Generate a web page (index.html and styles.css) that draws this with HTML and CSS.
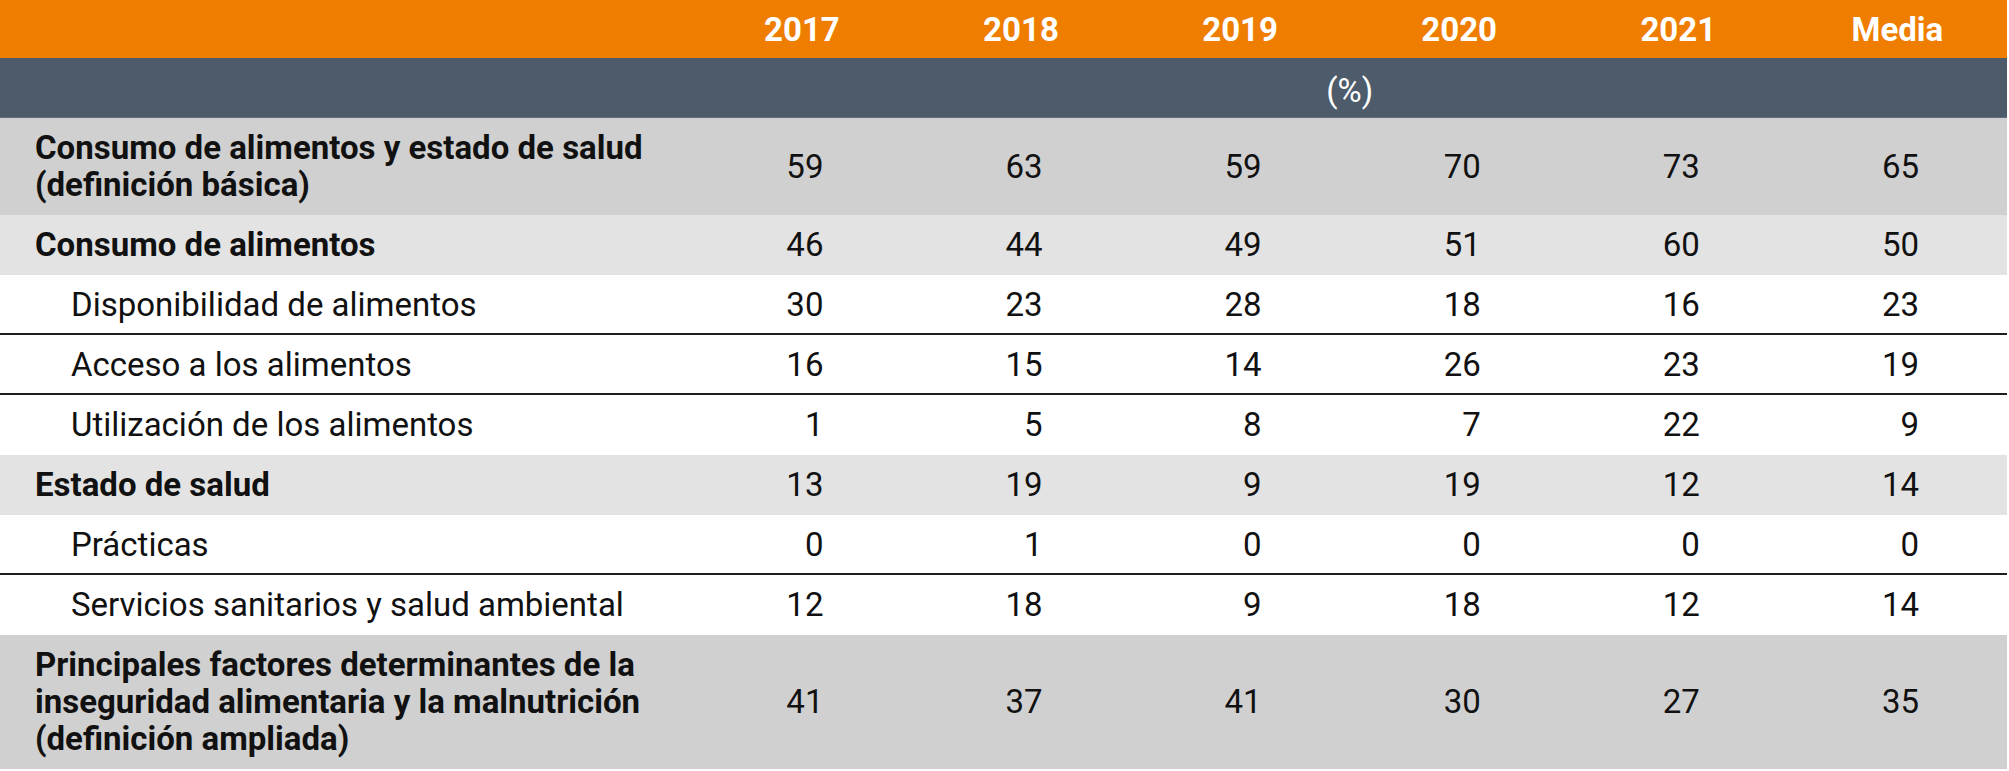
FILE: index.html
```html
<!DOCTYPE html>
<html lang="es">
<head>
<meta charset="utf-8">
<title>Tabla</title>
<link rel="stylesheet" href="styles.css">
</head>
<body>
<table class="data">
  <colgroup>
    <col class="col-label">
    <col class="col-num"><col class="col-num"><col class="col-num">
    <col class="col-num"><col class="col-num"><col class="col-num">
  </colgroup>
  <thead>
    <tr class="head-years">
      <th class="label"></th>
      <th>2017</th><th>2018</th><th>2019</th><th>2020</th><th>2021</th><th>Media</th>
    </tr>
    <tr class="head-unit">
      <th class="label"></th>
      <th colspan="6">(%)</th>
    </tr>
  </thead>
  <tbody>
    <tr class="row-main">
      <td class="label bold">Consumo de alimentos y estado de salud<br>(definición básica)</td>
      <td>59</td><td>63</td><td>59</td><td>70</td><td>73</td><td>65</td>
    </tr>
    <tr class="row-sub">
      <td class="label bold">Consumo de alimentos</td>
      <td>46</td><td>44</td><td>49</td><td>51</td><td>60</td><td>50</td>
    </tr>
    <tr class="row-item lined">
      <td class="label indent">Disponibilidad de alimentos</td>
      <td>30</td><td>23</td><td>28</td><td>18</td><td>16</td><td>23</td>
    </tr>
    <tr class="row-item lined">
      <td class="label indent">Acceso a los alimentos</td>
      <td>16</td><td>15</td><td>14</td><td>26</td><td>23</td><td>19</td>
    </tr>
    <tr class="row-item">
      <td class="label indent">Utilización de los alimentos</td>
      <td>1</td><td>5</td><td>8</td><td>7</td><td>22</td><td>9</td>
    </tr>
    <tr class="row-sub">
      <td class="label bold">Estado de salud</td>
      <td>13</td><td>19</td><td>9</td><td>19</td><td>12</td><td>14</td>
    </tr>
    <tr class="row-item lined">
      <td class="label indent">Prácticas</td>
      <td>0</td><td>1</td><td>0</td><td>0</td><td>0</td><td>0</td>
    </tr>
    <tr class="row-item">
      <td class="label indent">Servicios sanitarios y salud ambiental</td>
      <td>12</td><td>18</td><td>9</td><td>18</td><td>12</td><td>14</td>
    </tr>
    <tr class="row-main">
      <td class="label bold">Principales factores determinantes de la<br>inseguridad alimentaria y la malnutrición<br>(definición ampliada)</td>
      <td>41</td><td>37</td><td>41</td><td>30</td><td>27</td><td>35</td>
    </tr>
  </tbody>
</table>
</body>
</html>
```

FILE: styles.css
```css
html, body {
  margin: 0;
  padding: 0;
  background: #ffffff;
}

.data {
  width: 2007px;
  border-collapse: collapse;
  table-layout: fixed;
  font-family: Roboto, "Liberation Sans", Arial, sans-serif;
  font-size: 33px;
  line-height: 37px;
  color: #111111;
}

.col-label { width: 692px; }
.col-num { width: 219px; }

.data th,
.data td {
  padding: 0;
  vertical-align: middle;
}

.head-years th {
  background: #ef7d00;
  color: #ffffff;
  font-weight: 700;
  height: 58px;
  text-align: center;
}

.head-unit th {
  background: #4e5b6b;
  color: #ffffff;
  font-weight: 400;
  height: 59px;
  text-align: center;
  padding-top: 6px;
  border-bottom: 1px solid #636d7b;
  box-sizing: border-box;
}

.data td {
  text-align: right;
  padding: 11.5px 88px 11.5px 0;
}

.data td.label {
  text-align: left;
  padding-left: 35px;
  padding-right: 0;
}

.data td.indent {
  padding-left: 71px;
}

.bold {
  font-weight: 700;
}

.row-main td { background: #d0d0d0; }
.row-sub td { background: #e3e3e3; }
.row-item td { background: #ffffff; }

.data .lined td {
  border-bottom: 2px solid #1e1e1e;
  padding-bottom: 9.5px;
}
```
